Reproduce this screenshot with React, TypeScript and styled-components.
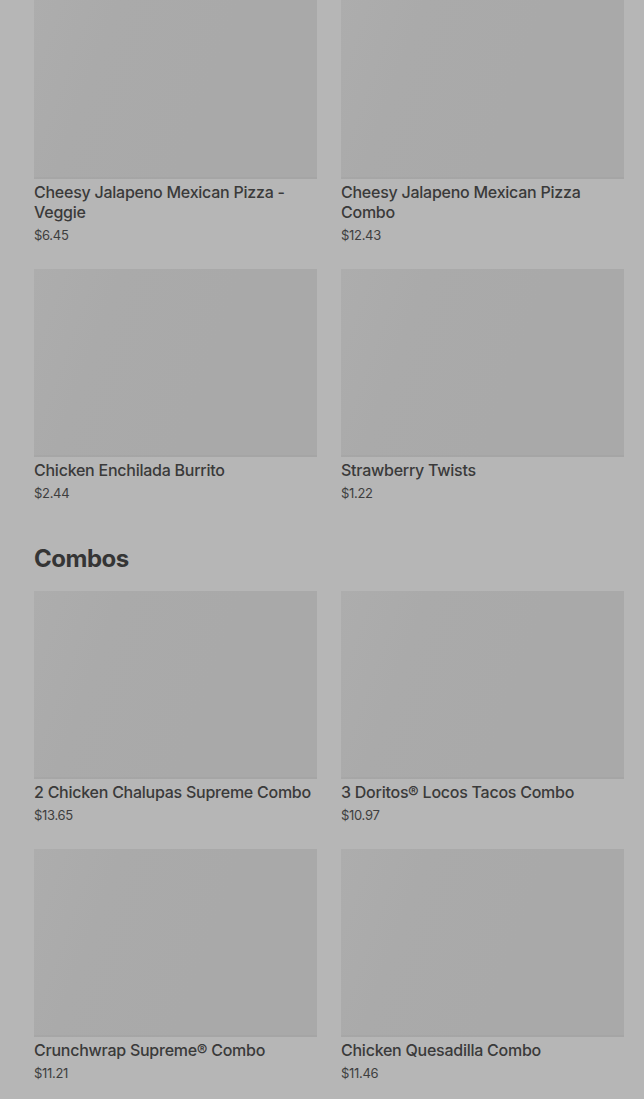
import styled, { createGlobalStyle } from "styled-components";

const GlobalStyle = createGlobalStyle`
  html, body {
    margin: 0;
    padding: 0;
    background-color: #b6b6b6;
    font-family: Inter, Roboto, "Liberation Sans", sans-serif;
    overflow: hidden;
  }
`;

const Page = styled.div`
  margin-top: -9px;
  padding: 0 20px 0 34px;
  display: flex;
  flex-direction: column;
`;

const Section = styled.section`
  display: flex;
  flex-direction: column;
  & + & {
    margin-top: 41px;
  }
`;

const SectionTitle = styled.h2`
  margin: 0 0 16px;
  font-size: 24px;
  line-height: 32px;
  font-weight: 700;
  color: #353535;
  letter-spacing: -0.5px;
`;

const Grid = styled.div`
  display: grid;
  grid-template-columns: 1fr 1fr;
  column-gap: 24px;
  row-gap: 25px;
`;

const Card = styled.div`
  display: flex;
  flex-direction: column;
`;

const Thumb = styled.div`
  height: 188px;
  background: linear-gradient(
    110deg,
    #adadad 0%,
    #aaaaaa 25%,
    #a9a9a9 60%,
    #a9a9a9 100%
  );
  box-shadow: inset 0 -2px 0 rgba(0, 0, 0, 0.02);
`;

const Name = styled.div`
  margin-top: 3px;
  font-size: 16px;
  line-height: 20px;
  font-weight: 500;
  color: #3a3a3a;
  letter-spacing: -0.25px;
`;

const Price = styled.div`
  margin-top: 4px;
  font-size: 13px;
  line-height: 18px;
  color: #3e3e3e;
  letter-spacing: -0.3px;
`;

type Item = { name: string; price: string };

const sections: { title?: string; items: Item[] }[] = [
  {
    items: [
      { name: "Cheesy Jalapeno Mexican Pizza - Veggie", price: "$6.45" },
      { name: "Cheesy Jalapeno Mexican Pizza Combo", price: "$12.43" },
      { name: "Chicken Enchilada Burrito", price: "$2.44" },
      { name: "Strawberry Twists", price: "$1.22" },
    ],
  },
  {
    title: "Combos",
    items: [
      { name: "2 Chicken Chalupas Supreme Combo", price: "$13.65" },
      { name: "3 Doritos® Locos Tacos Combo", price: "$10.97" },
      { name: "Crunchwrap Supreme® Combo", price: "$11.21" },
      { name: "Chicken Quesadilla Combo", price: "$11.46" },
    ],
  },
];

export default function App() {
  return (
    <>
      <GlobalStyle />
      <Page>
        {sections.map((s, i) => (
          <Section key={i}>
            {s.title && <SectionTitle>{s.title}</SectionTitle>}
            <Grid>
              {s.items.map((item) => (
                <Card key={item.name}>
                  <Thumb />
                  <Name>{item.name}</Name>
                  <Price>{item.price}</Price>
                </Card>
              ))}
            </Grid>
          </Section>
        ))}
      </Page>
    </>
  );
}
